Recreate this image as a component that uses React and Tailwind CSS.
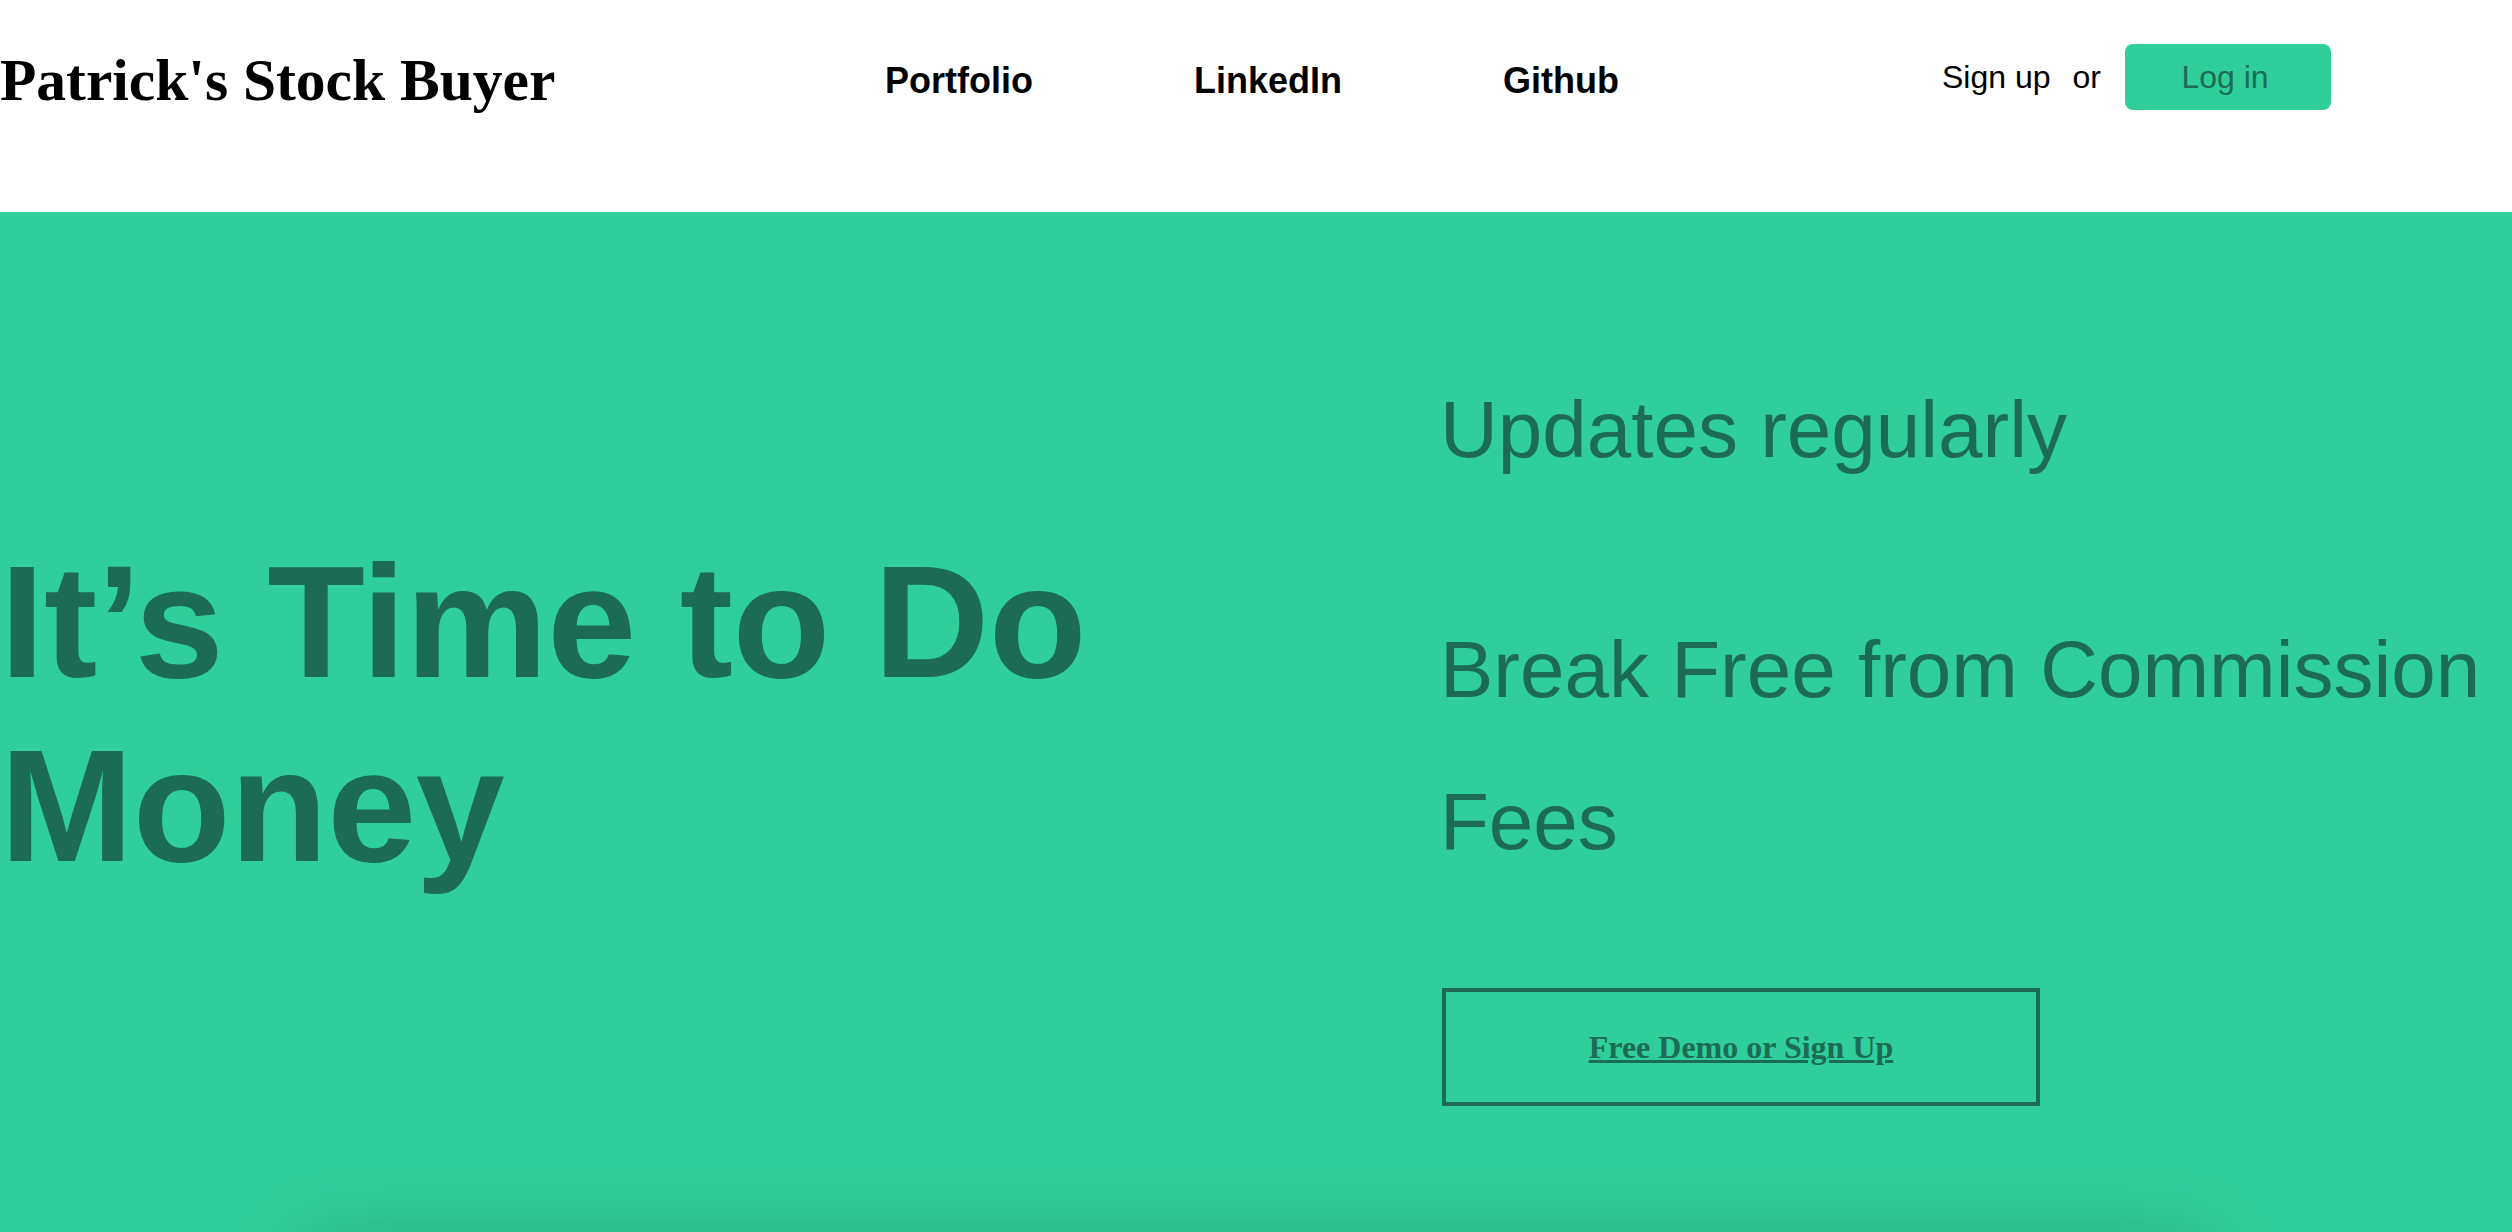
export default function App() {
  return (
    <div className="min-h-screen bg-[#30ce9a] font-['Liberation_Sans',Arial,sans-serif] overflow-hidden">
      <header className="h-[212px] bg-white flex items-start">
        <div className="h-[162px] w-full flex items-center">
          <div className="w-[885px] shrink-0 font-['Liberation_Serif','Times_New_Roman',serif] font-bold text-[59.5px] text-black whitespace-nowrap">
            Patrick's Stock Buyer
          </div>
          <nav className="flex gap-[161px] font-bold text-[36px] text-black">
            <a href="#">Portfolio</a>
            <a href="#">LinkedIn</a>
            <a href="#">Github</a>
          </nav>
          <div className="ml-auto mr-[181px] mb-[8px] flex items-center text-[32px] text-black">
            <span>Sign up</span>
            <span className="ml-[22px]">or</span>
            <button className="ml-[24px] w-[206px] h-[66px] rounded-[8px] bg-[#30ce9a] text-[#1b6b55] text-[32px] flex items-center justify-center pr-[6px]">
              Log in
            </button>
          </div>
        </div>
      </header>

      <section className="bg-[#30ce9a] text-[#1b6b55]">
        <div className="flex">
          <div className="w-[1440px] shrink-0 pt-[318px]">
            <h1 className="text-[160px] leading-[184px] font-bold whitespace-nowrap tracking-[-0.5px]">
              It’s Time to Do
              <br />
              Money
            </h1>
          </div>
          <div className="flex-1 pt-[172px]">
            <p className="text-[80px] leading-[92px] whitespace-nowrap">Updates regularly</p>
            <p className="mt-[118px] text-[80px] leading-[152px] whitespace-nowrap">
              Break Free from Commission
              <br />
              Fees
            </p>
            <a
              href="#"
              className="mt-[90px] ml-[2px] w-[598px] h-[118px] border-4 border-[#1b6b55] flex items-center justify-center font-['Liberation_Serif','Times_New_Roman',serif] font-bold text-[32px] underline"
            >
              Free Demo or Sign Up
            </a>
          </div>
        </div>
        <div className="mx-auto mt-[134px] w-[1910px] h-[300px] bg-[#30ce9a] shadow-[0_0_80px_rgba(0,0,0,0.18)]" />
      </section>
    </div>
  );
}
